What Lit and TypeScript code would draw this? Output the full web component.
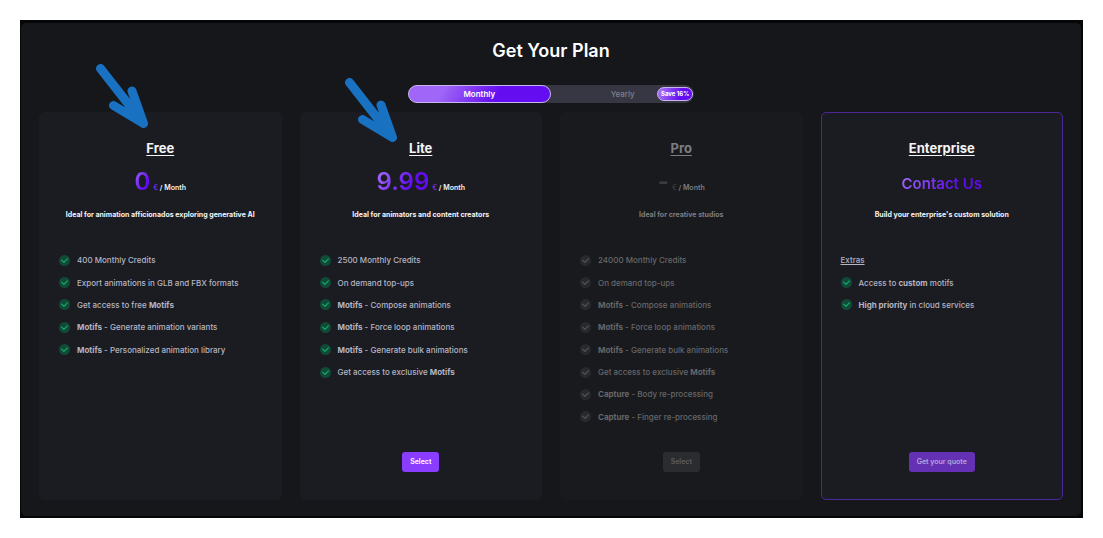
import { LitElement, html, css, nothing, type TemplateResult } from "lit";
import { customElement, property, state } from "lit/decorators.js";
import { classMap } from "lit/directives/class-map.js";

interface Plan {
  id: string;
  name: string;
  price?: string;
  headline?: string;
  tagline: string;
  extras?: boolean;
  features: TemplateResult[];
  action?: string;
  tone?: "muted" | "featured";
  arrow?: "high" | "low";
}

const PLANS: Plan[] = [
  {
    id: "free",
    name: "Free",
    price: "0",
    tagline: "Ideal for animation afficionados exploring generative AI",
    arrow: "high",
    features: [
      html`400 Monthly Credits`,
      html`Export animations in GLB and FBX formats`,
      html`Get access to free <b>Motifs</b>`,
      html`<b>Motifs</b> - Generate animation variants`,
      html`<b>Motifs</b> - Personalized animation library`,
    ],
  },
  {
    id: "lite",
    name: "Lite",
    price: "9.99",
    tagline: "Ideal for animators and content creators",
    arrow: "low",
    action: "Select",
    features: [
      html`2500 Monthly Credits`,
      html`On demand top-ups`,
      html`<b>Motifs</b> - Compose animations`,
      html`<b>Motifs</b> - Force loop animations`,
      html`<b>Motifs</b> - Generate bulk animations`,
      html`Get access to exclusive <b>Motifs</b>`,
    ],
  },
  {
    id: "pro",
    name: "Pro",
    price: "-",
    tagline: "Ideal for creative studios",
    tone: "muted",
    action: "Select",
    features: [
      html`24000 Monthly Credits`,
      html`On demand top-ups`,
      html`<b>Motifs</b> - Compose animations`,
      html`<b>Motifs</b> - Force loop animations`,
      html`<b>Motifs</b> - Generate bulk animations`,
      html`Get access to exclusive <b>Motifs</b>`,
      html`<b>Capture</b> - Body re-processing`,
      html`<b>Capture</b> - Finger re-processing`,
    ],
  },
  {
    id: "enterprise",
    name: "Enterprise",
    headline: "Contact Us",
    tagline: "Build your enterprise's custom solution",
    tone: "featured",
    extras: true,
    action: "Get your quote",
    features: [
      html`Access to <b>custom</b> motifs`,
      html`<b>High priority</b> in cloud services`,
    ],
  },
];

@customElement("plan-card")
class PlanCard extends LitElement {
  @property({ attribute: false }) plan!: Plan;

  static styles = css`
    :host {
      display: flex;
      min-width: 0;
    }
    .card {
      position: relative;
      flex: 1;
      display: flex;
      flex-direction: column;
      align-items: center;
      box-sizing: border-box;
      min-width: 0;
      padding: 25px 19px 27px;
      border: 1px solid #1b1c21;
      border-radius: 5px;
      background: #1b1c21;
      color: #f4f4f6;
    }
    .name {
      margin: 0;
      font-size: 13px;
      line-height: 20px;
      font-weight: 700;
      text-decoration: underline;
      text-decoration-thickness: 1px;
      text-underline-offset: 2px;
    }
    .price {
      display: flex;
      align-items: baseline;
      gap: 3px;
      height: 32px;
      margin: 8px 0 7px;
      line-height: 32px;
      font-size: 7px;
      font-weight: 600;
    }
    .amount,
    .headline {
      font-weight: 600;
      color: transparent;
      background: linear-gradient(120deg, #9d63f5 10%, #610bef 65%);
      background-clip: text;
      -webkit-background-clip: text;
    }
    .amount {
      font-size: 24px;
    }
    .headline {
      font-size: 15px;
      line-height: 36px;
    }
    .euro {
      color: #7a2bf5;
    }
    .tagline {
      margin: 0;
      font-size: 7px;
      line-height: 20px;
      font-weight: 700;
      white-space: nowrap;
    }
    .features {
      align-self: stretch;
      display: grid;
      grid-template-rows: repeat(8, 1fr);
      min-height: 179px;
      margin: 24px 0;
      padding: 0;
      list-style: none;
      font-size: 8px;
      font-weight: 500;
      color: #b5b5c3;
    }
    .feature {
      display: flex;
      align-items: center;
      gap: 7px;
      white-space: nowrap;
    }
    b {
      font-weight: 700;
    }
    .extras {
      text-decoration: underline;
      text-underline-offset: 1px;
    }
    .check {
      flex: none;
      width: 11px;
      height: 11px;
    }
    .disc {
      fill: #124a38;
    }
    .tick {
      fill: none;
      stroke: #10b26c;
      stroke-width: 1.1;
      stroke-linecap: round;
      stroke-linejoin: round;
    }
    .action {
      height: 20px;
      margin-top: auto;
      padding: 0 8px;
      border: 0;
      border-radius: 3px;
      background: #8a3cff;
      color: #fff;
      font: 600 7px/20px Inter, sans-serif;
      cursor: pointer;
    }
    .muted {
      background: #191a1d;
      border-color: #191a1d;
      color: #7d7d80;
    }
    .muted .amount,
    .muted .euro {
      color: #3c3c40;
      background: none;
    }
    .muted .features {
      color: #66676b;
    }
    .muted .disc {
      fill: #28292c;
    }
    .muted .tick {
      stroke: #55565a;
    }
    .muted .action {
      background: #2b2c30;
      color: #5c5d62;
      cursor: default;
    }
    .featured {
      border-color: #4c279a;
    }
    .featured .action {
      background: #6430b4;
      color: #b9a5d8;
    }
    .arrow {
      position: absolute;
      width: 56px;
      height: 66px;
      pointer-events: none;
    }
    .high {
      top: -51px;
      right: calc(50% + 10px);
    }
    .low {
      top: -37px;
      right: calc(50% + 22px);
    }
    .strokes {
      fill: none;
      stroke: #1971c2;
      stroke-width: 9;
      stroke-linecap: round;
      stroke-linejoin: round;
    }
    .head {
      fill: #1971c2;
    }
  `;

  render() {
    const p = this.plan;
    const muted = p.tone === "muted";
    return html`
      <article
        class=${classMap({ card: true, muted, featured: p.tone === "featured" })}
        aria-labelledby=${p.id}
      >
        <h2 class="name" id=${p.id}>${p.name}</h2>
        <div class="price">
          ${p.headline
            ? html`<span class="headline">${p.headline}</span>`
            : html`<span class="amount">${p.price}</span>
                <span><span class="euro">€</span> / Month</span>`}
        </div>
        <p class="tagline">${p.tagline}</p>
        <ul class="features">
          ${p.extras
            ? html`<li class="feature"><span class="extras">Extras</span></li>`
            : nothing}
          ${p.features.map(
            (f) => html`<li class="feature">
              <svg class="check" viewBox="0 0 11 11" aria-hidden="true">
                <circle class="disc" cx="5.5" cy="5.5" r="5.5" />
                <path class="tick" d="M2.6 5.2 L4.9 7.3 L8.4 3.9" />
              </svg>
              <span>${f}</span>
            </li>`
          )}
        </ul>
        ${p.action
          ? html`<button class="action" type="button" ?disabled=${muted}>
              ${p.action}
            </button>`
          : nothing}
        ${p.arrow
          ? html`<svg
              class=${classMap({ arrow: true, [p.arrow]: true })}
              viewBox="0 0 56 66"
              aria-hidden="true"
            >
              <path
                class="strokes"
                d="M6.5 6.5 L49.5 61.5 M19.5 43.5 L49.5 61.5 L38 29"
              />
              <path class="head" d="M31 47 L37 39 L42 42 L51 62 Z" />
            </svg>`
          : nothing}
      </article>
    `;
  }
}

@customElement("app-root")
class AppRoot extends LitElement {
  @state() private period = "monthly";

  static styles = css`
    :host {
      display: block;
      box-sizing: border-box;
      min-height: 100vh;
      padding: 20px;
      background: #fff;
      font-family: Inter, sans-serif;
    }
    .frame {
      padding: 3px 2px 2px 1px;
      background: #050607;
    }
    .dialog {
      display: flex;
      flex-direction: column;
      padding: 16px 18px;
      border-radius: 5px;
      background: #16171b;
    }
    .title {
      margin: 0 0 22px;
      font-size: 18px;
      line-height: 24px;
      font-weight: 600;
      text-align: center;
      color: #fff;
    }
    .toggle {
      align-self: center;
      display: grid;
      grid-template-columns: 1fr 1fr;
      width: 28%;
      min-width: 240px;
      height: 18px;
      margin-bottom: 9px;
      border-radius: 9px;
      background: #363742;
    }
    .option {
      position: relative;
      display: flex;
      align-items: center;
      justify-content: center;
      box-sizing: border-box;
      border: 1px solid transparent;
      border-radius: 9px;
      font-size: 8px;
      font-weight: 500;
      color: #7f808c;
      cursor: pointer;
    }
    .option input {
      position: absolute;
      inset: 0;
      margin: 0;
      opacity: 0;
    }
    .chosen {
      border-color: #c8b4ee;
      background: linear-gradient(120deg, #9f66f7 25%, #640df0 62%) border-box;
      color: #fff;
      font-weight: 600;
    }
    .badge {
      position: absolute;
      top: 1px;
      right: 0;
      box-sizing: border-box;
      height: 14px;
      padding: 0 3px;
      border: 1px solid #c8b4ee;
      border-radius: 7px;
      background: linear-gradient(110deg, #9f66f7 15%, #640df0 65%) border-box;
      color: #fff;
      font-size: 6px;
      line-height: 12px;
      font-weight: 700;
    }
    .plans {
      display: grid;
      grid-template-columns: repeat(4, minmax(0, 1fr));
      gap: 18px;
    }
    @media (max-width: 960px) {
      .plans {
        grid-template-columns: repeat(2, minmax(0, 1fr));
      }
    }
  `;

  private option(value: string, label: string, badge?: string) {
    const chosen = this.period === value;
    return html`<label class=${classMap({ option: true, chosen })}>
      <input
        type="radio"
        name="period"
        value=${value}
        .checked=${chosen}
        @change=${() => (this.period = value)}
      />
      ${label} ${badge ? html`<span class="badge">${badge}</span>` : nothing}
    </label>`;
  }

  render() {
    return html`
      <div class="frame">
        <main class="dialog">
          <h1 class="title">Get Your Plan</h1>
          <div class="toggle" role="radiogroup" aria-label="Billing period">
            ${this.option("monthly", "Monthly")}
            ${this.option("yearly", "Yearly", "Save 16%")}
          </div>
          <section class="plans">
            ${PLANS.map((plan) => html`<plan-card .plan=${plan}></plan-card>`)}
          </section>
        </main>
      </div>
    `;
  }
}
